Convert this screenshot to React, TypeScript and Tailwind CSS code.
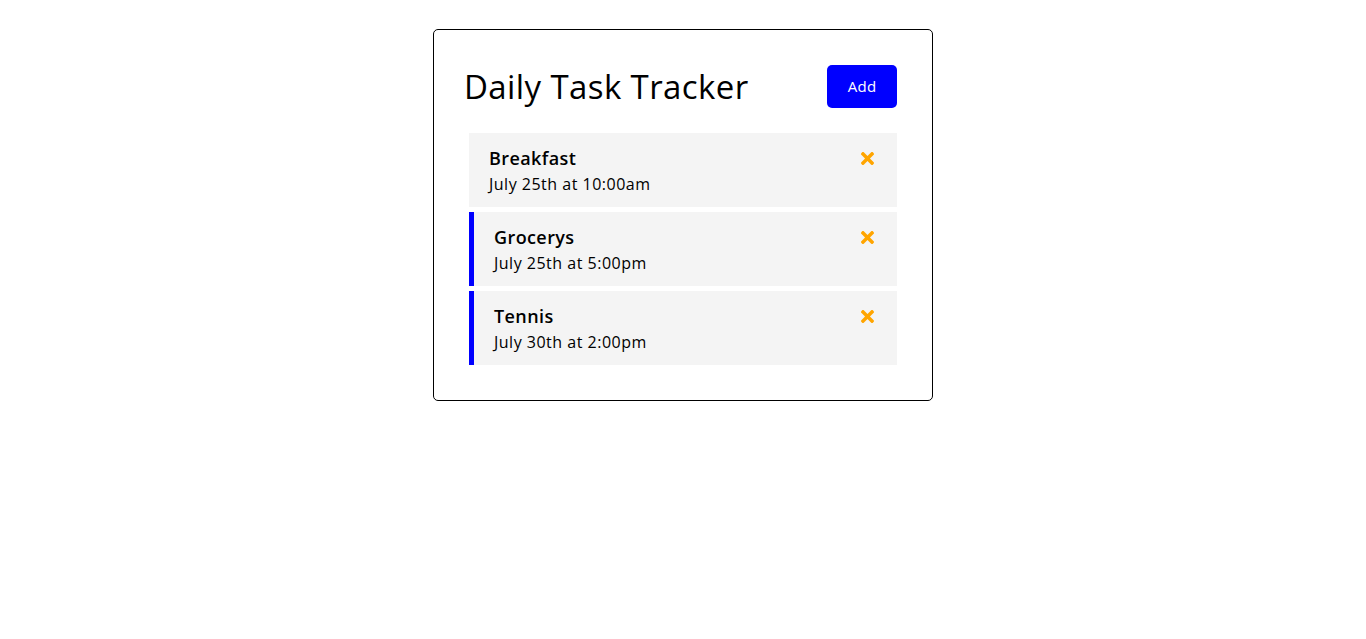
import React from 'react';
import { FaTimes } from 'react-icons/fa';

const TASKS = [
  { id: 1, text: 'Breakfast', day: 'July 25th at 10:00am', reminder: false },
  { id: 2, text: 'Grocerys', day: 'July 25th at 5:00pm', reminder: true },
  { id: 3, text: 'Tennis', day: 'July 30th at 2:00pm', reminder: true },
];

const App: React.FC = () => {
  return (
    <div className="min-h-screen bg-white font-['Open_Sans',sans-serif] text-black">
      <div className="max-w-[500px] mx-auto mt-[29px] border border-black rounded-[5px] px-[30px] pt-[30px] pb-[35px]">
        {/* Header */}
        <header className="flex items-center justify-between mb-5">
          <h1 className="text-[33px] leading-[48px] font-normal tracking-[0.4px]">Daily Task Tracker</h1>
          <button className="m-[5px] w-[70px] py-2.5 rounded-[5px] bg-[#0000ff] text-white text-[15px] leading-[23px] tracking-[0.3px]">
            Add
          </button>
        </header>

        {/* Tasks */}
        <div className="flex flex-col gap-[5px]">
          {TASKS.map((task) => (
            <div
              key={task.id}
              className={`mx-[5px] bg-[#f4f4f4] py-2.5 px-5 ${task.reminder ? 'border-l-[5px] border-[#0000ff]' : ''}`}
            >
              <h3 className="flex items-center justify-between text-[18px] leading-[30px] font-semibold tracking-[0.4px]">
                {task.text}
                <FaTimes className="text-[#ffa500] text-[19px] mr-0" />
              </h3>
              <p className="text-[16px] leading-6 tracking-[0.5px] -mt-[1px] pb-[1px]">{task.day}</p>
            </div>
          ))}
        </div>
      </div>
    </div>
  );
};

export default App;
